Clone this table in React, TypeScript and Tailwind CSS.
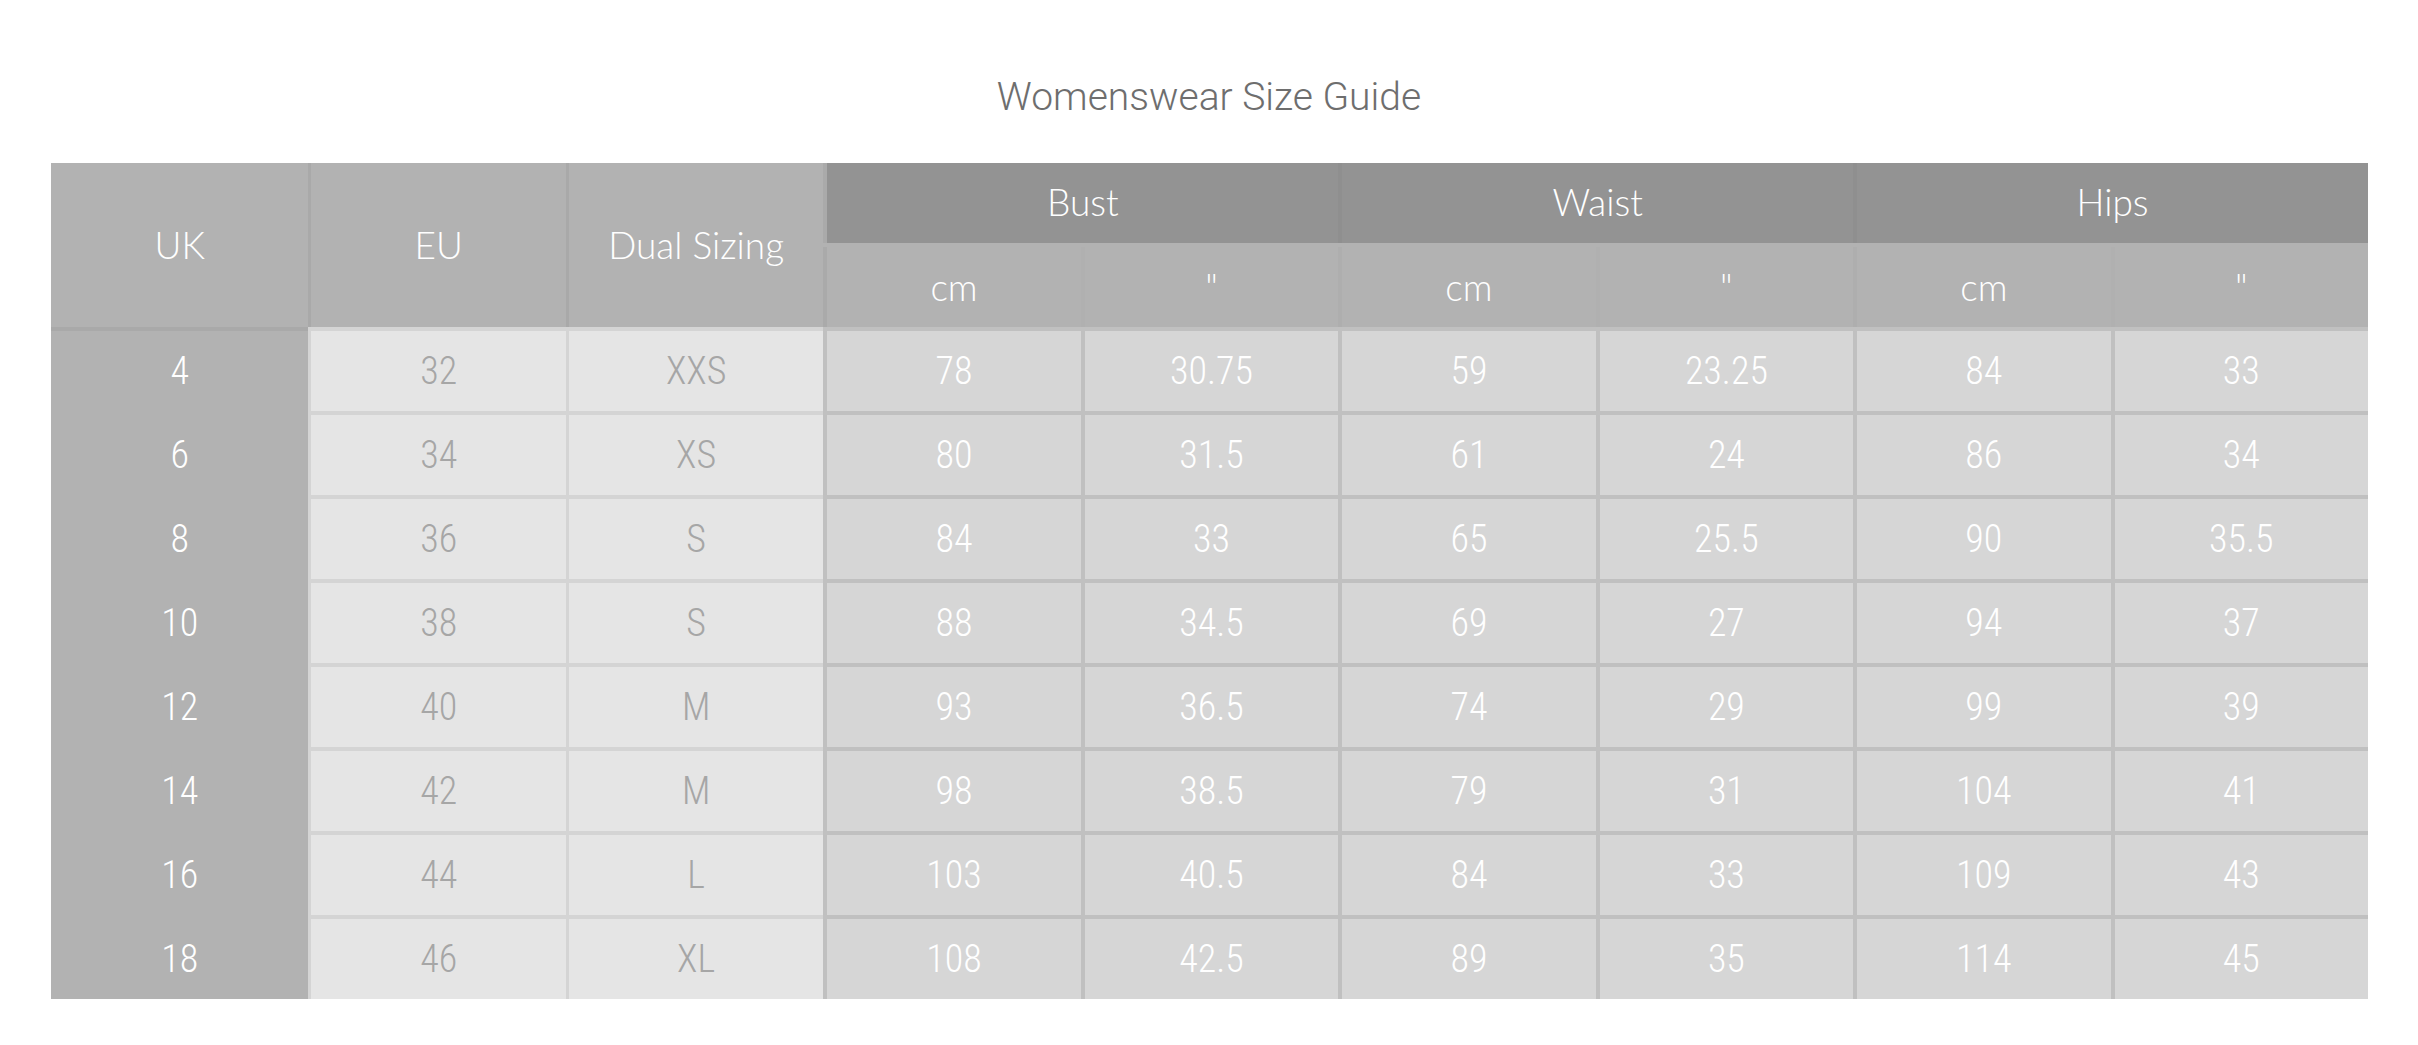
import React from 'react';

const rows = [
  { uk: '4', eu: '32', dual: 'XXS', m: ['78', '30.75', '59', '23.25', '84', '33'] },
  { uk: '6', eu: '34', dual: 'XS', m: ['80', '31.5', '61', '24', '86', '34'] },
  { uk: '8', eu: '36', dual: 'S', m: ['84', '33', '65', '25.5', '90', '35.5'] },
  { uk: '10', eu: '38', dual: 'S', m: ['88', '34.5', '69', '27', '94', '37'] },
  { uk: '12', eu: '40', dual: 'M', m: ['93', '36.5', '74', '29', '99', '39'] },
  { uk: '14', eu: '42', dual: 'M', m: ['98', '38.5', '79', '31', '104', '41'] },
  { uk: '16', eu: '44', dual: 'L', m: ['103', '40.5', '84', '33', '109', '43'] },
  { uk: '18', eu: '46', dual: 'XL', m: ['108', '42.5', '89', '35', '114', '45'] },
];

const head = "font-['Lato','Open_Sans',sans-serif] font-light text-[37px] text-white";
const num = "font-['Roboto_Condensed','Roboto',sans-serif] font-light text-[38px]";

export default function App() {
  return (
    <div className="min-h-screen bg-white">
      <h1 className="pt-[72px] mb-[41px] text-center text-[39px] leading-[50px] font-light text-[#6e6e6e] font-['Roboto','Liberation_Sans',sans-serif]">
        Womenswear Size Guide
      </h1>

      <div className="ml-[51px] w-[2317px] grid grid-cols-9 bg-[#b2b2b2]">
        {/* header */}
        <div className={`row-span-2 h-[164px] flex items-center justify-center ${head}`}>UK</div>
        <div className={`row-span-2 h-[164px] flex items-center justify-center border-l-[3px] border-[#a9a9a9] ${head}`}>EU</div>
        <div className={`row-span-2 h-[164px] flex items-center justify-center border-l-[3px] border-[#a9a9a9] ${head}`}>Dual Sizing</div>
        <div className={`col-span-2 h-[80px] pb-[2px] bg-[#939393] border-l-4 border-[#aaaaaa] flex items-center justify-center ${head}`}>Bust</div>
        <div className={`col-span-2 h-[80px] pb-[2px] bg-[#939393] border-l-4 border-[#8f8f8f] flex items-center justify-center ${head}`}>Waist</div>
        <div className={`col-span-2 h-[80px] pb-[2px] bg-[#939393] border-l-4 border-[#8f8f8f] flex items-center justify-center ${head}`}>Hips</div>
        <div className={`mt-[4px] h-[80px] border-l-4 border-[#aaaaaa] flex items-center justify-center ${head}`}>cm</div>
        <div className={`mt-[4px] h-[80px] border-l-4 border-[#b0b0b0] flex items-center justify-center ${head}`}>"</div>
        <div className={`mt-[4px] h-[80px] border-l-4 border-[#aeaeae] flex items-center justify-center ${head}`}>cm</div>
        <div className={`mt-[4px] h-[80px] border-l-4 border-[#b0b0b0] flex items-center justify-center ${head}`}>"</div>
        <div className={`mt-[4px] h-[80px] border-l-4 border-[#aeaeae] flex items-center justify-center ${head}`}>cm</div>
        <div className={`mt-[4px] h-[80px] border-l-4 border-[#b0b0b0] flex items-center justify-center ${head}`}>"</div>

        {/* body */}
        {rows.map((r, i) => (
          <React.Fragment key={r.uk}>
            <div
              className={`h-[84px] border-t-4 flex items-center justify-center text-white ${num} ${
                i === 0 ? 'border-[#a9a9a9]' : 'border-[#b2b2b2]'
              }`}
            >
              {r.uk}
            </div>
            <div className={`h-[84px] border-t-4 border-l-[3px] border-[#d4d4d4] bg-[#e5e5e5] flex items-center justify-center text-[#a6a6a6] ${num}`}>
              {r.eu}
            </div>
            <div className={`h-[84px] border-t-4 border-l-[3px] border-[#d4d4d4] bg-[#e5e5e5] flex items-center justify-center text-[#a6a6a6] ${num}`}>
              {r.dual}
            </div>
            {r.m.map((v, j) => (
              <div
                key={j}
                className={`h-[84px] border-t-4 border-l-4 border-[#c0c0c0] bg-[#d6d6d6] flex items-center justify-center text-white ${num}`}
              >
                {v}
              </div>
            ))}
          </React.Fragment>
        ))}
      </div>
    </div>
  );
}
